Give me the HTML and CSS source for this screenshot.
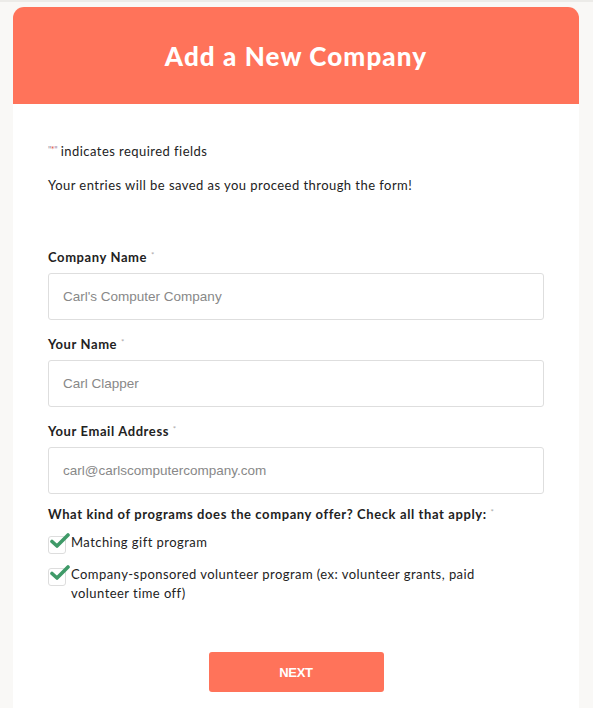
FILE: index.html
```html
<!DOCTYPE html>
<html>
<head>
<meta charset="utf-8">
<link rel="stylesheet" href="styles.css">
</head>
<body>
<div class="page">
  <div class="card">
    <div class="header"><h1>Add a New Company</h1></div>
    <div class="body">
      <p class="note"><span class="q">"<span class="ast">*</span>"</span> indicates required fields</p>
      <p class="note second">Your entries will be saved as you proceed through the form!</p>
      <div class="fields">
        <div class="field">
          <label class="lbl">Company Name <span class="req">*</span></label>
          <div class="input">Carl's Computer Company</div>
        </div>
        <div class="field">
          <label class="lbl">Your Name <span class="req">*</span></label>
          <div class="input">Carl Clapper</div>
        </div>
        <div class="field">
          <label class="lbl">Your Email Address <span class="req">*</span></label>
          <div class="input">carl@carlscomputercompany.com</div>
        </div>
        <div class="field checks">
          <label class="lbl">What kind of programs does the company offer? Check all that apply: <span class="req">*</span></label>
          <div class="opt">
            <span class="box"><svg viewBox="0 0 20 16" width="20" height="16"><path d="M2 8.5 L7 13 L18 2" fill="none" stroke="#3f9a68" stroke-width="3.6" stroke-linecap="round" stroke-linejoin="round"/></svg></span>
            <span class="otext">Matching gift program</span>
          </div>
          <div class="opt">
            <span class="box"><svg viewBox="0 0 20 16" width="20" height="16"><path d="M2 8.5 L7 13 L18 2" fill="none" stroke="#3f9a68" stroke-width="3.6" stroke-linecap="round" stroke-linejoin="round"/></svg></span>
            <span class="otext">Company-sponsored volunteer program (ex: volunteer grants, paid volunteer time off)</span>
          </div>
        </div>
      </div>
      <div class="actions"><button class="next">NEXT</button></div>
    </div>
  </div>
</div>
</body>
</html>
```

FILE: styles.css
```css
html, body { margin: 0; padding: 0; }
body {
  background: #f9f8f6;
  font-family: "Lato", "Open Sans", sans-serif;
  color: #222;
}
.page {
  border-top: 2px solid #ecebe8;
  padding: 5px 14px 0 13px;
}
.card {
  background: #fff;
  border-radius: 11px 11px 0 0;
  overflow: hidden;
  height: 720px;
}
.header {
  background: #ff735a;
  height: 97px;
  display: flex;
  align-items: center;
  justify-content: center;
}
.header h1 {
  margin: 0;
  color: #fff;
  font-size: 26px;
  font-weight: 900;
  letter-spacing: 1.1px;
  padding-top: 1px;
}
.body {
  padding: 37px 35px 0 35px;
}
.note {
  margin: 0;
  font-size: 13px;
  letter-spacing: 0.45px;
  line-height: 18px;
  color: #222;
}
.note.second { margin-top: 16px; }
.q { color: #9a8aa6; font-size: 9px; vertical-align: 3px; letter-spacing: -0.5px; }
.ast { color: #e0533f; }
.fields {
  margin-top: 52px;
  display: flex;
  flex-direction: column;
  gap: 13px;
}
.field { display: flex; flex-direction: column; }
.lbl {
  font-size: 13px;
  font-weight: 700;
  letter-spacing: 0.6px;
  line-height: 18px;
  color: #222;
  margin-bottom: 7px;
}
.req { color: #aaa; font-size: 8px; vertical-align: 4px; font-weight: 400; }
.input {
  border: 1px solid #dedede;
  border-radius: 3px;
  box-sizing: border-box;
  height: 47px;
  display: flex;
  align-items: center;
  padding-left: 14px;
  font-family: "Liberation Sans", Arial, sans-serif;
  font-size: 13.5px;
  color: #888;
}
.checks { margin-top: -4px; }
.checks .lbl { margin-bottom: 10px; }
.opt {
  display: flex;
  align-items: flex-start;
  margin-bottom: 11px;
  padding-right: 50px;
}
.box {
  position: relative;
  flex: none;
  width: 16px;
  height: 16px;
  border: 1px solid #ddd;
  border-radius: 3px;
  margin-top: 3px;
  margin-right: 5px;
}
.box svg { position: absolute; left: 1px; top: -4px; }
.otext {
  font-size: 13px;
  letter-spacing: 0.45px;
  line-height: 19px;
  color: #222;
}
.actions {
  display: flex;
  justify-content: center;
  margin-top: 38px;
}
.next {
  width: 175px;
  height: 40px;
  border: none;
  border-radius: 3px;
  background: #ff735a;
  color: #fff;
  font-family: "Liberation Sans", Arial, sans-serif;
  font-weight: 700;
  font-size: 13px;
  letter-spacing: -0.3px;
}
```
